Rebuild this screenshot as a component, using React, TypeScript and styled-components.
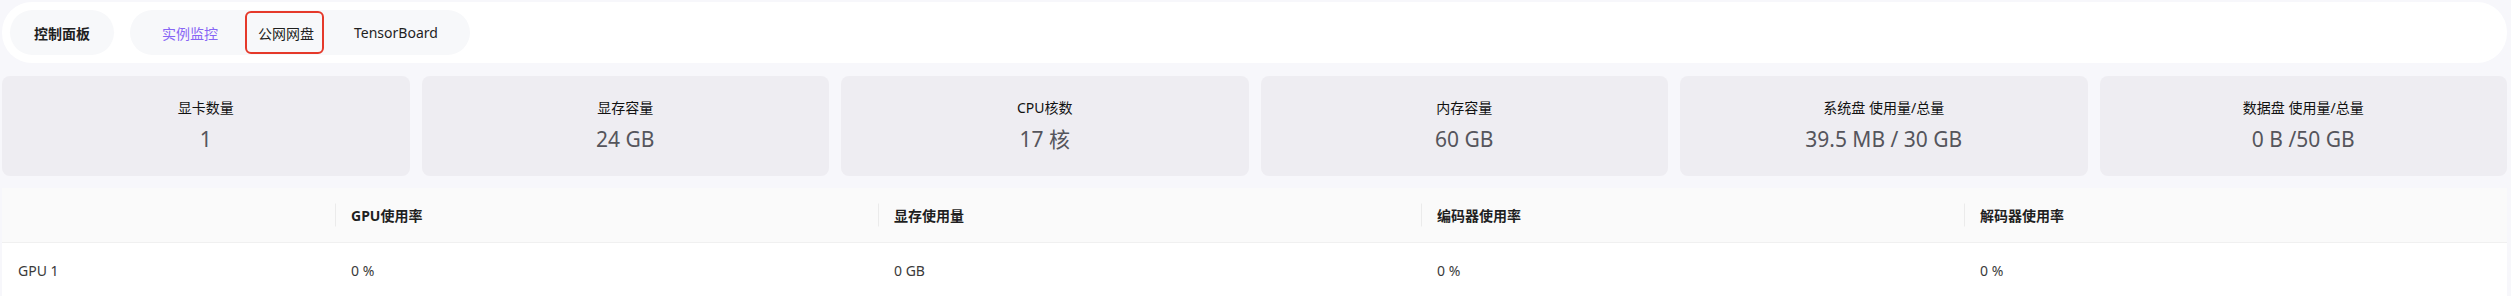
import React from "react";
import styled, { createGlobalStyle } from "styled-components";

const Global = createGlobalStyle`
  html, body { margin: 0; padding: 0; background: #f7f7fb; }
  body {
    font-family: "Noto Sans", "Noto Sans CJK SC", sans-serif;
    color: #1f1f1f;
  }
  * { box-sizing: border-box; }
`;

const Page = styled.div`
  display: flex;
  flex-direction: column;
  padding: 2px 4px 0 2px;
  gap: 13px;
`;

const TabBar = styled.div`
  display: flex;
  align-items: center;
  gap: 16px;
  height: 61px;
  padding: 0 8px;
  background: #ffffff;
  border-radius: 30px;
`;

const Pill = styled.div`
  display: flex;
  align-items: center;
  height: 45px;
  padding: 0 12px;
  background: #f7f8fa;
  border-radius: 23px;
`;

const Tab = styled.div<{ $active?: boolean; $bold?: boolean; $marked?: boolean; $tight?: boolean }>`
  position: relative;
  display: flex;
  align-items: center;
  height: 45px;
  padding: ${(p) => (p.$tight ? "0 12px" : "0 20px")};
  font-size: 14px;
  font-weight: ${(p) => (p.$bold ? 700 : 400)};
  color: ${(p) => (p.$active ? "#8766f5" : "#1f1f1f")};
  white-space: nowrap;
  &::after {
    content: "";
    display: ${(p) => (p.$marked ? "block" : "none")};
    position: absolute;
    left: 7px;
    right: 10px;
    top: 1px;
    bottom: 1px;
    border: 2px solid #e5392a;
    border-radius: 6px;
  }
`;

const Cards = styled.div`
  display: grid;
  grid-template-columns: repeat(6, 1fr);
  gap: 12px;
`;

const Card = styled.div`
  height: 100px;
  background: #eeedf2;
  border-radius: 8px;
  display: flex;
  flex-direction: column;
  align-items: center;
  justify-content: center;
  gap: 5px;
  padding-bottom: 2px;
`;

const CardLabel = styled.div`
  font-size: 14px;
  line-height: 22px;
  color: #111111;
`;

const CardValue = styled.div`
  font-size: 21px;
  line-height: 30px;
  color: #55555c;
`;

const Table = styled.div`
  margin-top: -1px;
  display: flex;
  flex-direction: column;
`;

const Row = styled.div<{ $head?: boolean }>`
  display: grid;
  grid-template-columns: 333px repeat(4, 1fr);
  height: ${(p) => (p.$head ? "55px" : "54px")};
  background: ${(p) => (p.$head ? "#fafafa" : "#ffffff")};
  border-bottom: ${(p) => (p.$head ? "1px solid #f0f0f0" : "none")};
`;

const Cell = styled.div<{ $head?: boolean; $sep?: boolean }>`
  position: relative;
  display: flex;
  align-items: center;
  padding: 0 16px;
  font-size: 14px;
  font-weight: ${(p) => (p.$head ? 700 : 400)};
  color: ${(p) => (p.$head ? "#1f1f1f" : "#3a3a3a")};
  &::before {
    content: "";
    display: ${(p) => (p.$sep ? "block" : "none")};
    position: absolute;
    left: 0;
    top: 50%;
    width: 1px;
    height: 23px;
    transform: translateY(-50%);
    background: rgba(0, 0, 0, 0.06);
  }
`;

const stats = [
  { label: "显卡数量", value: "1" },
  { label: "显存容量", value: "24 GB" },
  { label: "CPU核数", value: "17 核" },
  { label: "内存容量", value: "60 GB" },
  { label: "系统盘 使用量/总量", value: "39.5 MB / 30 GB" },
  { label: "数据盘 使用量/总量", value: "0 B /50 GB" },
];

const heads = ["", "GPU使用率", "显存使用量", "编码器使用率", "解码器使用率"];
const rows = [["GPU 1", "0 %", "0 GB", "0 %", "0 %"]];

export default function App() {
  return (
    <>
      <Global />
      <Page>
        <TabBar>
          <Pill>
            <Tab $bold $tight>控制面板</Tab>
          </Pill>
          <Pill>
            <Tab $active>实例监控</Tab>
            <Tab $marked>公网网盘</Tab>
            <Tab>TensorBoard</Tab>
          </Pill>
        </TabBar>
        <Cards>
          {stats.map((s) => (
            <Card key={s.label}>
              <CardLabel>{s.label}</CardLabel>
              <CardValue>{s.value}</CardValue>
            </Card>
          ))}
        </Cards>
        <Table>
          <Row $head>
            {heads.map((h, i) => (
              <Cell key={i} $head $sep={i > 0}>
                {h}
              </Cell>
            ))}
          </Row>
          {rows.map((r, ri) => (
            <Row key={ri}>
              {r.map((c, ci) => (
                <Cell key={ci}>{c}</Cell>
              ))}
            </Row>
          ))}
        </Table>
      </Page>
    </>
  );
}
